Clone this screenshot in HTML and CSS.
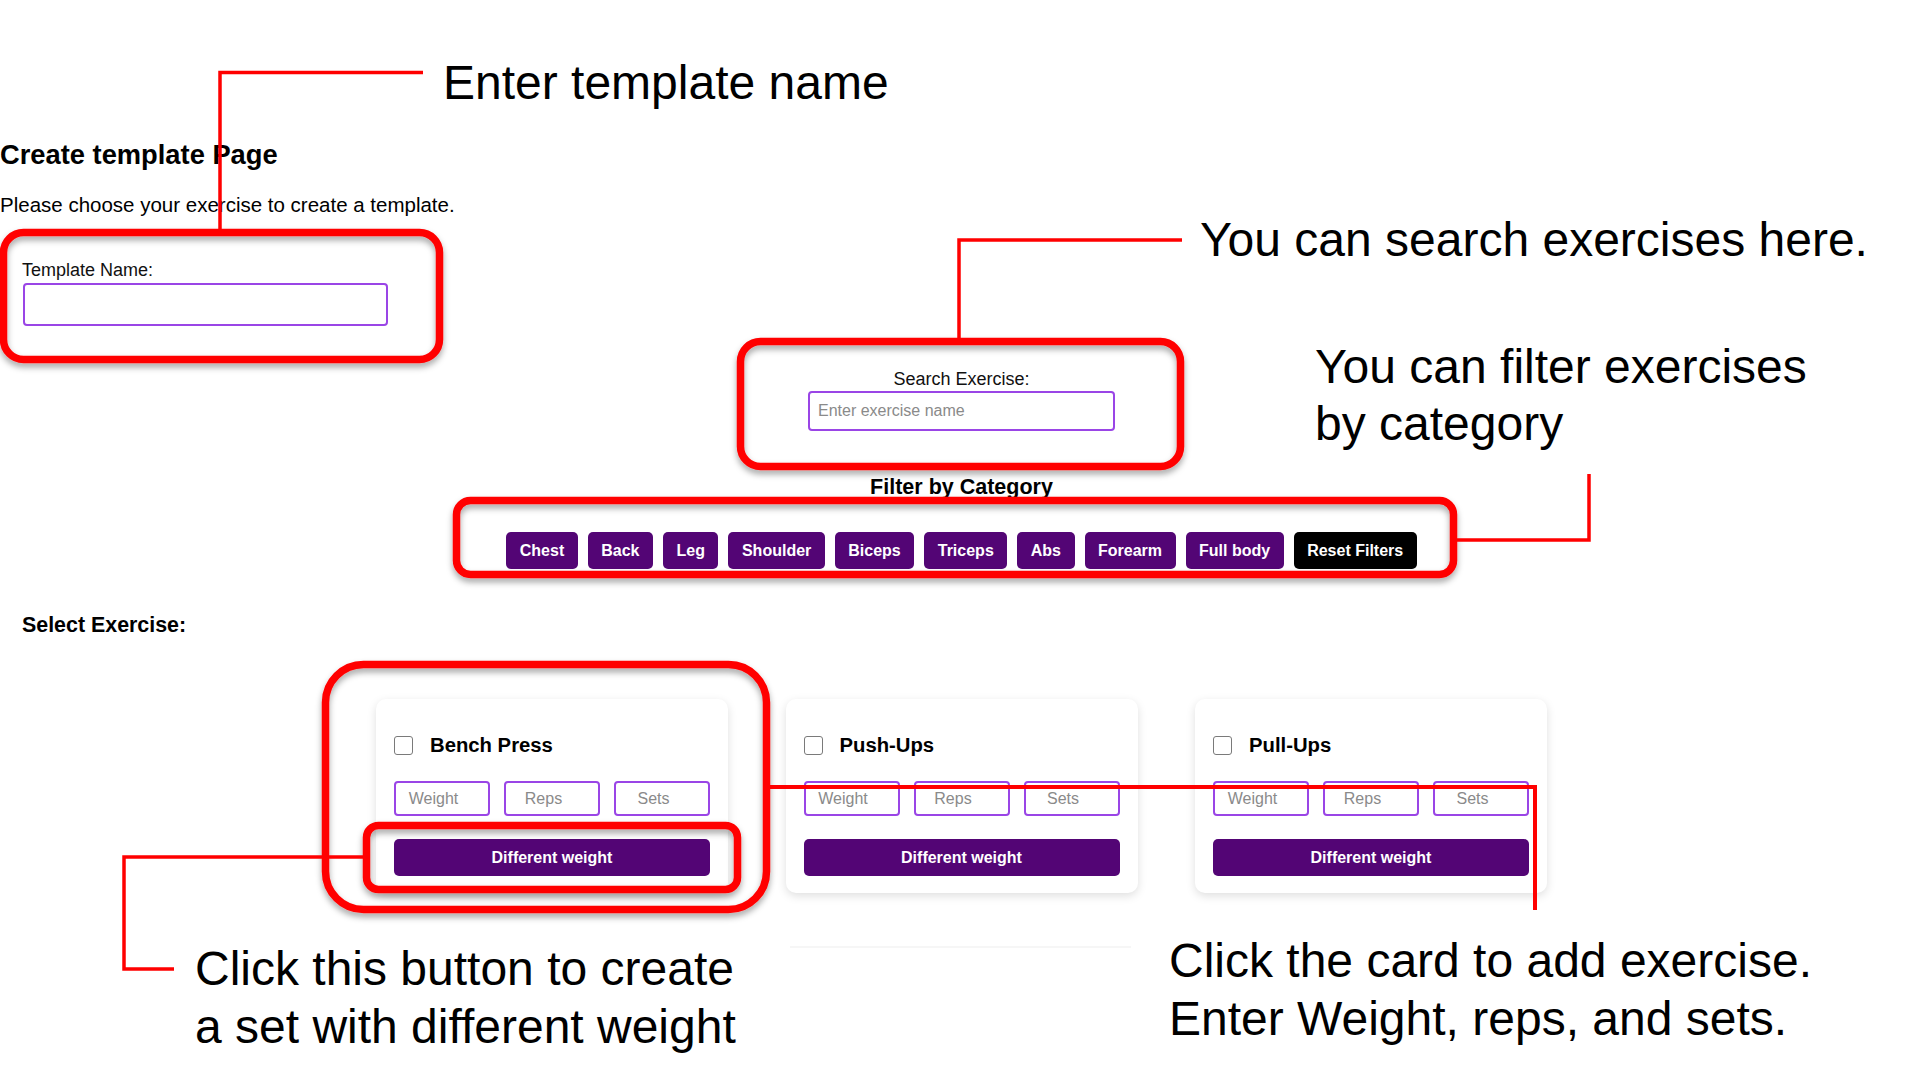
FILE: index.html
```html
<!DOCTYPE html>
<html lang="en">
<head>
<meta charset="utf-8">
<title>Create template Page</title>
<link rel="stylesheet" href="styles.css">
</head>
<body>
<div class="page">
  <h2 class="title">Create template Page</h2>
  <p class="intro">Please choose your exercise to create a template.</p>
  <div class="content">
    <div class="name-field">
      <label class="field-label" for="tname">Template Name:</label>
      <input class="name-input" id="tname" type="text">
    </div>
    <div class="search">
      <label class="field-label" for="search">Search Exercise:</label>
      <input class="search-input" id="search" type="text" placeholder="Enter exercise name">
    </div>
    <h3 class="filter-title">Filter by Category</h3>
    <div class="filters">
      <button class="filter-btn">Chest</button>
      <button class="filter-btn">Back</button>
      <button class="filter-btn">Leg</button>
      <button class="filter-btn">Shoulder</button>
      <button class="filter-btn">Biceps</button>
      <button class="filter-btn">Triceps</button>
      <button class="filter-btn">Abs</button>
      <button class="filter-btn">Forearm</button>
      <button class="filter-btn">Full body</button>
      <button class="filter-btn reset">Reset Filters</button>
    </div>
    <h3 class="select-title">Select Exercise:</h3>
    <div class="cards">
      <div class="card">
        <div class="card-head"><span class="checkbox"></span><span class="card-name">Bench Press</span></div>
        <div class="card-inputs">
          <input class="num-input" type="text" placeholder="Weight">
          <input class="num-input" type="text" placeholder="Reps">
          <input class="num-input" type="text" placeholder="Sets">
        </div>
        <button class="diff-btn">Different weight</button>
      </div>
      <div class="card">
        <div class="card-head"><span class="checkbox"></span><span class="card-name">Push-Ups</span></div>
        <div class="card-inputs">
          <input class="num-input" type="text" placeholder="Weight">
          <input class="num-input" type="text" placeholder="Reps">
          <input class="num-input" type="text" placeholder="Sets">
        </div>
        <button class="diff-btn">Different weight</button>
      </div>
      <div class="card">
        <div class="card-head"><span class="checkbox"></span><span class="card-name">Pull-Ups</span></div>
        <div class="card-inputs">
          <input class="num-input" type="text" placeholder="Weight">
          <input class="num-input" type="text" placeholder="Reps">
          <input class="num-input" type="text" placeholder="Sets">
        </div>
        <button class="diff-btn">Different weight</button>
      </div>
    </div>
  </div>
</div>

<div class="annotations">
  <div class="faint-line"></div>
  <svg class="overlay" width="1919" height="1079" viewBox="0 0 1919 1079">
    <defs>
      <filter id="sh" x="-5%" y="-10%" width="110%" height="130%">
        <feDropShadow dx="0" dy="4" stdDeviation="3" flood-color="#000" flood-opacity="0.35"/>
      </filter>
    </defs>
    <g fill="none" stroke="#ff0000" stroke-width="7.5" filter="url(#sh)">
      <rect x="3.5" y="232.5" width="436" height="127" rx="20"/>
      <rect x="740.5" y="341.5" width="440" height="125" rx="20"/>
      <rect x="456.5" y="500.5" width="997" height="74" rx="14"/>
      <rect x="325.5" y="664.5" width="441" height="245" rx="38"/>
      <rect x="366.5" y="825.5" width="371" height="64" rx="12"/>
    </g>
    <g fill="none" stroke="#ff0000" stroke-width="3.5">
      <polyline points="423,72.5 220,72.5 220,230"/>
      <polyline points="1182,240 959,240 959,338"/>
      <polyline points="1589,474 1589,540 1457,540"/>
      <polyline points="363,857 124,857 124,969 174,969"/>
      <polyline points="770,787 1535,787 1535,910" stroke-width="4"/>
    </g>
  </svg>
  <div class="note note-name">Enter template name</div>
  <div class="note note-search">You can search exercises here.</div>
  <div class="note note-filter">You can filter exercises<br>by category</div>
  <div class="note note-button">Click this button to create<br>a set with different weight</div>
  <div class="note note-card">Click the card to add exercise.<br>Enter Weight, reps, and sets.</div>
</div>
</body>
</html>
```

FILE: styles.css
```css
html, body {
  margin: 0;
  padding: 0;
  background: #ffffff;
}

body {
  position: relative;
  width: 1919px;
  height: 1079px;
  overflow: hidden;
  font-family: "Liberation Sans", Arial, sans-serif;
  color: #000;
}

.page {
  padding-top: 139px;
}

.title {
  margin: 0;
  font-size: 27.3px;
  line-height: 31px;
  font-weight: 700;
}

.intro {
  margin: 23px 0 0;
  font-size: 20.5px;
  line-height: 24px;
}

.content {
  padding: 0 18px 0 22px;
}

.name-field {
  margin-top: 43px;
}

.field-label {
  display: block;
  font-size: 18px;
  line-height: 21px;
  color: #111;
}

.name-input {
  display: block;
  margin: 2px 0 0 1px;
  width: 365px;
  height: 43px;
  box-sizing: border-box;
  border: 2px solid #9a45e6;
  border-radius: 4px;
  outline: none;
  background: #fff;
}

.search {
  margin-top: 43px;
  display: flex;
  flex-direction: column;
  align-items: center;
}

.search-input {
  margin-top: 1px;
  width: 307px;
  height: 40px;
  box-sizing: border-box;
  border: 2px solid #9a45e6;
  border-radius: 4px;
  padding: 0 8px;
  font-family: "Liberation Sans", Arial, sans-serif;
  font-size: 16px;
  outline: none;
}

.search-input::placeholder,
.num-input::placeholder {
  color: #8a8a8a;
}

.filter-title {
  margin: 44px 0 0;
  text-align: center;
  font-size: 21.5px;
  line-height: 25px;
  font-weight: 700;
}

.filters {
  margin-top: 32px;
  display: flex;
  justify-content: center;
  gap: 10px;
}

.filter-btn {
  height: 37px;
  padding: 0 13.5px;
  border: none;
  border-radius: 5px;
  background: #530575;
  color: #fff;
  font-family: "Liberation Sans", Arial, sans-serif;
  font-size: 16px;
  font-weight: 700;
}

.filter-btn.reset {
  background: #000;
}

.select-title {
  margin: 44px 0 0;
  font-size: 21.4px;
  line-height: 25px;
  font-weight: 700;
}

.cards {
  margin-top: 61px;
  display: flex;
  justify-content: center;
  gap: 57.5px;
}

.card {
  width: 352px;
  box-sizing: border-box;
  padding: 36px 18px 17px;
  border-radius: 10px;
  background: #fff;
  box-shadow: 0 3px 10px rgba(0, 0, 0, 0.13);
}

.card-head {
  display: flex;
  align-items: center;
  gap: 17px;
  height: 20px;
}

.checkbox {
  width: 19px;
  height: 19px;
  box-sizing: border-box;
  border: 1.5px solid #7a7a7a;
  border-radius: 3px;
  background: #fff;
}

.card-name {
  font-size: 20.3px;
  line-height: 23px;
  font-weight: 700;
}

.card-inputs {
  margin-top: 26px;
  display: flex;
  gap: 14px;
}

.num-input {
  flex: 1;
  min-width: 0;
  height: 35px;
  box-sizing: border-box;
  border: 2px solid #9a45e6;
  border-radius: 4px;
  padding: 0 19px 0 2px;
  text-align: center;
  font-family: "Liberation Sans", Arial, sans-serif;
  font-size: 16px;
  outline: none;
}

.diff-btn {
  display: block;
  margin-top: 23px;
  width: 100%;
  height: 37px;
  border: none;
  border-radius: 5px;
  background: #530575;
  color: #fff;
  font-family: "Liberation Sans", Arial, sans-serif;
  font-size: 16px;
  font-weight: 700;
}

/* annotation layer laid over the screenshot */
.annotations {
  position: absolute;
  left: 0;
  top: 0;
  width: 1919px;
  height: 1079px;
  pointer-events: none;
}

.overlay {
  position: absolute;
  left: 0;
  top: 0;
}

.faint-line {
  position: absolute;
  left: 790px;
  top: 946px;
  width: 341px;
  height: 2px;
  background: #f6f6f6;
}

.note {
  position: absolute;
  font-family: "Liberation Sans", Arial, sans-serif;
  font-size: 48px;
  line-height: 58px;
  color: #000;
  white-space: nowrap;
}

.note-name {
  left: 443px;
  top: 54px;
}

.note-search {
  left: 1200px;
  top: 210.5px;
}

.note-filter {
  left: 1315px;
  top: 337.5px;
  line-height: 57px;
}

.note-button {
  left: 195px;
  top: 939.5px;
}

.note-card {
  left: 1169px;
  top: 931.5px;
}
```
